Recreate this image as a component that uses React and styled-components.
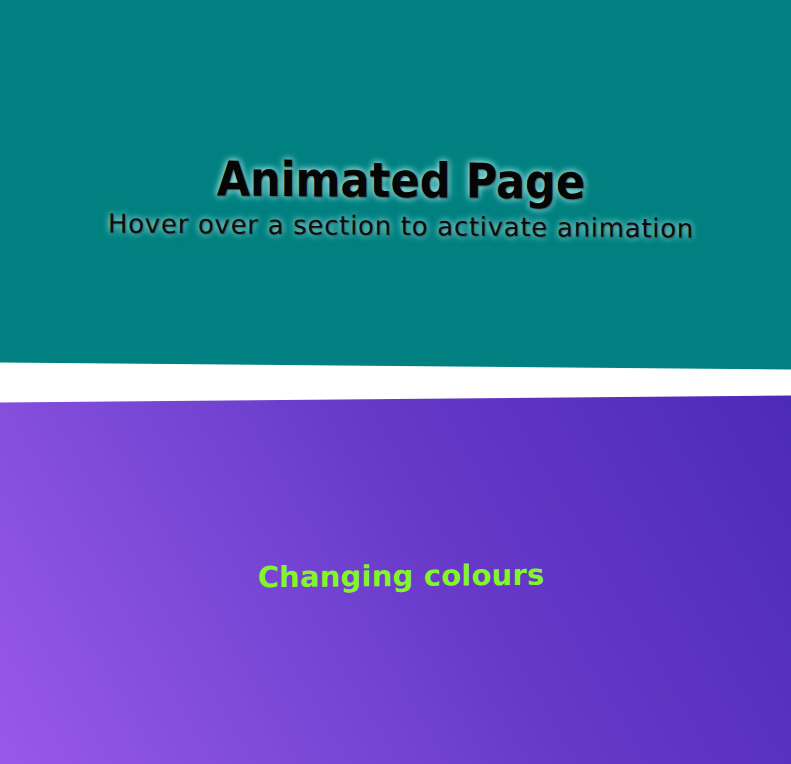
import React from "react";
import styled, { createGlobalStyle } from "styled-components";

const Global = createGlobalStyle`
  html, body { margin: 0; padding: 0; background: #ffffff; overflow: hidden; }
  body { font-family: "DejaVu Sans", Verdana, sans-serif; }
`;

const Page = styled.main`
  display: flex;
  flex-direction: column;
  width: 100%;
  height: 764px;
  overflow: hidden;
`;

const Hero = styled.header`
  flex: none;
  height: 376px;
  margin-top: -10px;
  box-sizing: border-box;
  padding-top: 162px;
  padding-left: 11px;
  background: #008080;
  transform: skewY(0.5deg);
  display: flex;
  flex-direction: column;
  align-items: center;
`;

const Title = styled.h1`
  margin: 0;
  font-family: "DejaVu Sans Condensed", "DejaVu Sans", sans-serif;
  font-stretch: condensed;
  font-weight: bold;
  font-size: 48px;
  line-height: 1.2;
  color: #050505;
  text-shadow: 1px 1px 2px rgba(0, 0, 0, 0.5), 0 0 6px rgba(200, 255, 255, 0.9), 0 0 10px rgba(170, 240, 240, 0.6);
`;

const Subtitle = styled.p`
  margin: 0;
  font-family: "DejaVu Sans", sans-serif;
  font-size: 26px;
  line-height: 1.25;
  letter-spacing: 0.7px;
  color: #0c0c0c;
  text-shadow: 1px 1px 2px rgba(0, 0, 0, 0.4), 0 0 6px rgba(200, 255, 255, 0.85), 0 0 9px rgba(170, 240, 240, 0.5);
`;

const Panel = styled.section`
  flex: none;
  margin-top: 33px;
  height: 420px;
  box-sizing: border-box;
  padding-top: 160px;
  padding-left: 11px;
  background: linear-gradient(60deg, #9c5aeb 0%, #7a48d6 35%, #6638c8 60%, #4c2ab8 100%);
  transform: skewY(-0.5deg);
  display: flex;
  flex-direction: column;
  align-items: center;
`;

const Changing = styled.h2`
  margin: 0;
  font-family: "DejaVu Sans", sans-serif;
  font-weight: bold;
  font-size: 29px;
  line-height: 1.2;
  letter-spacing: 0.2px;
  color: #84f52a;
`;

export default function App() {
  return (
    <>
      <Global />
      <Page>
        <Hero>
          <Title>Animated Page</Title>
          <Subtitle>Hover over a section to activate animation</Subtitle>
        </Hero>
        <Panel>
          <Changing>Changing colours</Changing>
        </Panel>
      </Page>
    </>
  );
}
